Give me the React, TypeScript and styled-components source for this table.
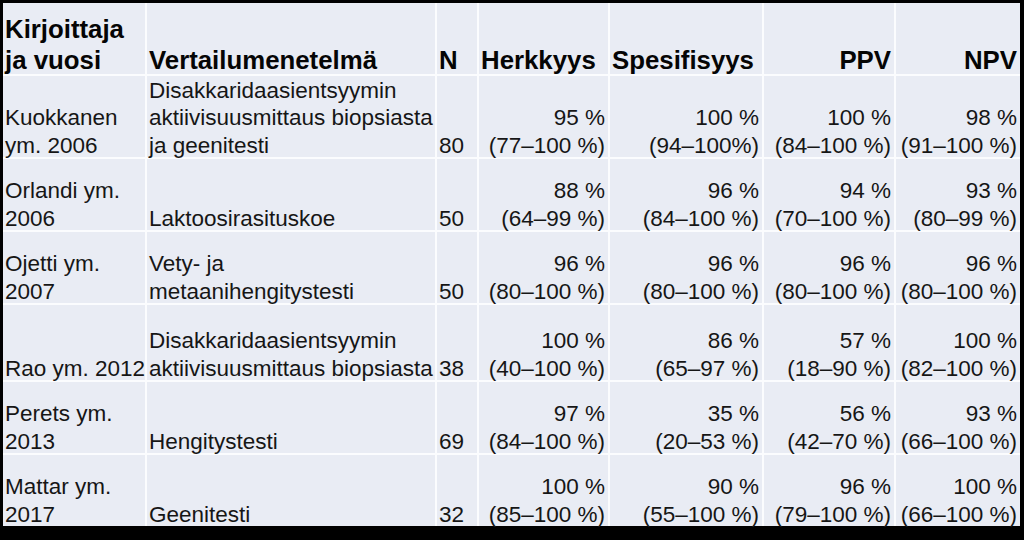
import React from 'react';
import styled, { createGlobalStyle } from 'styled-components';

type Align = 'left' | 'right';

interface Row {
    author: string[];
    method: string[];
    n: string;
    values: [string, string][];
}

const rows: Row[] = [
    {
        author: ['Kuokkanen', 'ym. 2006'],
        method: ['Disakkaridaasientsyymin', 'aktiivisuusmittaus biopsiasta', 'ja geenitesti'],
        n: '80',
        values: [['95 %', '(77–100 %)'], ['100 %', '(94–100%)'], ['100 %', '(84–100 %)'], ['98 %', '(91–100 %)']],
    },
    {
        author: ['Orlandi ym.', '2006'],
        method: ['Laktoosirasituskoe'],
        n: '50',
        values: [['88 %', '(64–99 %)'], ['96 %', '(84–100 %)'], ['94 %', '(70–100 %)'], ['93 %', '(80–99 %)']],
    },
    {
        author: ['Ojetti ym.', '2007'],
        method: ['Vety- ja', 'metaanihengitystesti'],
        n: '50',
        values: [['96 %', '(80–100 %)'], ['96 %', '(80–100 %)'], ['96 %', '(80–100 %)'], ['96 %', '(80–100 %)']],
    },
    {
        author: ['Rao ym. 2012'],
        method: ['Disakkaridaasientsyymin', 'aktiivisuusmittaus biopsiasta'],
        n: '38',
        values: [['100 %', '(40–100 %)'], ['86 %', '(65–97 %)'], ['57 %', '(18–90 %)'], ['100 %', '(82–100 %)']],
    },
    {
        author: ['Perets ym.', '2013'],
        method: ['Hengitystesti'],
        n: '69',
        values: [['97 %', '(84–100 %)'], ['35 %', '(20–53 %)'], ['56 %', '(42–70 %)'], ['93 %', '(66–100 %)']],
    },
    {
        author: ['Mattar ym.', '2017'],
        method: ['Geenitesti'],
        n: '32',
        values: [['100 %', '(85–100 %)'], ['90 %', '(55–100 %)'], ['96 %', '(79–100 %)'], ['100 %', '(66–100 %)']],
    },
];

const headers: { lines: string[]; align: Align }[] = [
    { lines: ['Kirjoittaja', 'ja vuosi'], align: 'left' },
    { lines: ['Vertailumenetelmä'], align: 'left' },
    { lines: ['N'], align: 'left' },
    { lines: ['Herkkyys'], align: 'left' },
    { lines: ['Spesifisyys'], align: 'left' },
    { lines: ['PPV'], align: 'right' },
    { lines: ['NPV'], align: 'right' },
];

const App: React.FC = () => {
    return (
        <>
            <GlobalStyle />
            <Table>
                {headers.map((h, i) => (
                    <HeadCell key={i} $align={h.align}>
                        {h.lines.map((l) => <Line key={l}>{l}</Line>)}
                    </HeadCell>
                ))}
                {rows.map((r, ri) => (
                    <React.Fragment key={ri}>
                        <Cell $align="left">
                            {r.author.map((l) => <Line key={l}>{l}</Line>)}
                        </Cell>
                        <Cell $align="left">
                            {r.method.map((l) => <Line key={l}>{l}</Line>)}
                        </Cell>
                        <Cell $align="left">
                            <Line>{r.n}</Line>
                        </Cell>
                        {r.values.map(([pct, ci], vi) => (
                            <Cell key={vi} $align="right">
                                <Line>{pct}</Line>
                                <Line>{ci}</Line>
                            </Cell>
                        ))}
                    </React.Fragment>
                ))}
            </Table>
        </>
    );
}
export default App;


const GlobalStyle = createGlobalStyle`
    html, body {
        margin: 0;
        padding: 0;
        background: #000;
    }
    #root {
        width: 1024px;
        height: 540px;
        padding: 3px 0 0 3px;
        box-sizing: border-box;
        overflow: hidden;
    }
`;

const Table = styled.div`
    display: grid;
    grid-template-columns: 142px 288px 40px 129px 152px 130px 124px;
    grid-template-rows: 71px 81px 71px 71px 75px 71px 71px;
    gap: 2px;
    width: 1017px;
    background: #fbfcfe;
    font-family: "Liberation Sans", Arial, sans-serif;
    color: #161616;
`;

const Cell = styled.div<{ $align: Align }>`
    display: flex;
    flex-direction: column;
    justify-content: flex-end;
    align-items: ${(p) => (p.$align === 'right' ? 'flex-end' : 'flex-start')};
    background: #e9ecf4;
    padding: 0 3px 0 2px;
    font-size: 22.5px;
    line-height: 27.5px;
    white-space: nowrap;
    overflow: visible;
`;

const HeadCell = styled(Cell)`
    font-size: 25.8px;
    font-weight: bold;
    line-height: 31px;
    color: #050505;
`;

const Line = styled.span`
    display: block;
    &:last-child {
        margin-bottom: -2px;
    }
`;
